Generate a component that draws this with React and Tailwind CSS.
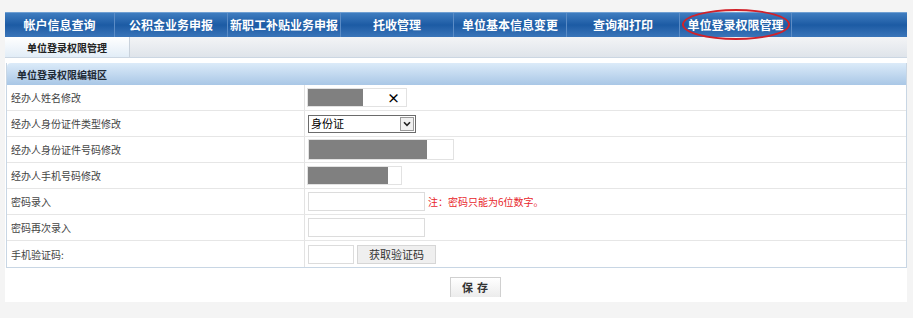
import React from "react";

const navItems = [
  { label: "帐户信息查询", w: "w-[110px]" },
  { label: "公积金业务申报", w: "w-[113px]" },
  { label: "新职工补贴业务申报", w: "w-[113px]" },
  { label: "托收管理", w: "w-[113px]" },
  { label: "单位基本信息变更", w: "w-[113px]" },
  { label: "查询和打印", w: "w-[113px]" },
  { label: "单位登录权限管理", w: "w-[112px]", circled: true },
];

const FONT = { fontFamily: '"Noto Sans CJK SC", "Liberation Sans", sans-serif' };

// one row of the edit form: label on the left, controls on the right
const Row = ({ label, children, last }) => (
  <div className={`flex h-[26px] ${last ? "" : "border-b border-[#e6e6e6]"}`}>
    <div className="w-[298px] shrink-0 border-r border-[#e3e3e3] pl-[4px] flex items-center text-[10px] text-[#444]">
      {label}
    </div>
    <div className="flex-1 flex items-center pl-[2px] gap-[3px]">{children}</div>
  </div>
);

const Masked = ({ boxW, maskW, extra }) => (
  <div className={`relative h-[19px] ${boxW} border border-[#e2e2e2] bg-white flex items-center`}>
    <div className={`h-full ${maskW} bg-[#808080]`}></div>
    {extra}
  </div>
);

export default function App() {
  return (
    <div className="w-[913px] h-[318px] bg-[#f4f4f4] pt-[12px] overflow-hidden" style={FONT}>
      <div className="mx-[5px] w-[902px] bg-white h-[290px]">
        {/* top navigation */}
        <div className="flex h-[25px] border-t border-[#6f9fd2] bg-linear-to-b from-[#3f7dc0] via-[#1c5ba4] to-[#3a75b9]">
          {navItems.map((it) => (
            <div
              key={it.label}
              className={`relative ${it.w} shrink-0 border-r border-[#5b8cc6] flex items-center justify-center text-white font-bold text-[12px]`}
            >
              {it.label}
              {it.circled && (
                <div className="absolute left-[2px] top-[-4px] w-[108px] h-[31px] rounded-[50%] border-[2px] border-[#d0222a]"></div>
              )}
            </div>
          ))}
        </div>

        {/* sub tab bar */}
        <div className="flex h-[21px] bg-linear-to-b from-[#f3f4f6] to-[#dfe4ea] border-b border-[#cbd6e2]">
          <div className="w-[125px] border-r border-[#c9d2dc] bg-linear-to-b from-white to-[#e2edf7] flex items-center justify-center text-[10px] font-bold text-[#222]">
            单位登录权限管理
          </div>
        </div>

        {/* edit panel */}
        <div className="mt-[5px] ml-[1px] border border-[#c8d6e4] border-t-0">
          <div className="h-[22px] rounded-tl-[4px] bg-linear-to-b from-[#dcebf9] to-[#a9c7e6] flex items-center pl-[10px] text-[10px] font-bold text-[#1f2a36]">
            单位登录权限编辑区
          </div>
          <Row label="经办人姓名修改">
            <Masked
              boxW="w-[100px]"
              maskW="w-[55px]"
              extra={<span className="absolute right-[6px] top-[-1px] text-[13px] font-bold text-black">×</span>}
            />
          </Row>
          <Row label="经办人身份证件类型修改">
            <div className="ml-[1px] h-[18px] w-[108px] border border-[#6b6b6b] bg-white flex items-center justify-between">
              <span className="pl-[2px] text-[11px] text-black leading-none">身份证</span>
              <span className="mr-[1px] h-[14px] w-[14px] border border-[#9a9a9a] bg-[#f0f0f0] flex items-center justify-center">
                <svg width="8" height="6" viewBox="0 0 8 6">
                  <path d="M1 1.2 L4 4.4 L7 1.2" stroke="#222" strokeWidth="1.6" fill="none" />
                </svg>
              </span>
            </div>
          </Row>
          <Row label="经办人身份证件号码修改">
            <Masked boxW="ml-[1px] w-[146px] h-[21px]" maskW="w-[118px]" />
          </Row>
          <Row label="经办人手机号码修改">
            <Masked boxW="w-[95px]" maskW="w-[80px]" />
          </Row>
          <Row label="密码录入">
            <div className="ml-[1px] h-[19px] w-[117px] border border-[#dcdcdc] bg-white"></div>
            <span className="text-[10px] text-[#e8262b]">注：密码只能为6位数字。</span>
          </Row>
          <Row label="密码再次录入">
            <div className="ml-[1px] h-[19px] w-[117px] border border-[#dcdcdc] bg-white"></div>
          </Row>
          <Row label="手机验证码:" last>
            <div className="ml-[1px] h-[19px] w-[46px] border border-[#dcdcdc] bg-white"></div>
            <button className="h-[19px] w-[79px] border border-[#d6d6d6] bg-[#efefef] text-[11px] text-[#333] leading-none">
              获取验证码
            </button>
          </Row>
        </div>

        {/* save */}
        <div className="flex justify-center pt-[9px] pl-[38px]">
          <button className="h-[20px] w-[51px] border border-[#d0d0d0] border-b-0 bg-linear-to-b from-white to-[#ececec] text-[11px] font-bold text-[#333] leading-none tracking-[4px] pl-[4px]">
            保存
          </button>
        </div>
      </div>
    </div>
  );
}
